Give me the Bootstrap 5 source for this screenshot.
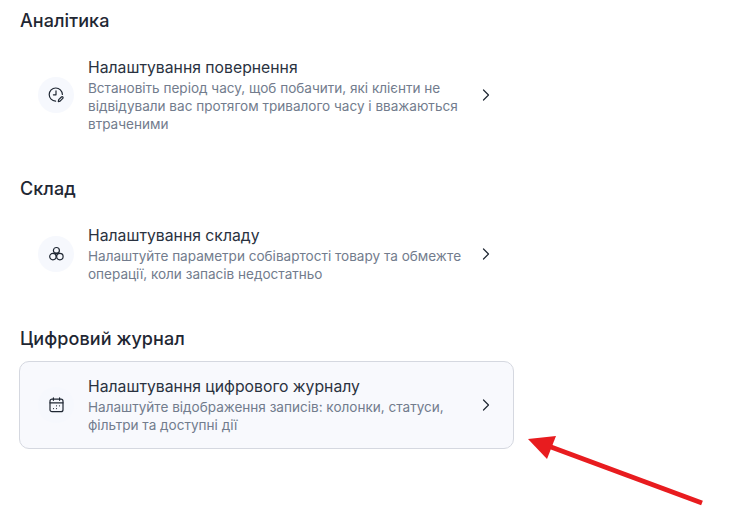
<!doctype html>
<html lang="uk"><head><meta charset="utf-8">
<link href="https://cdn.jsdelivr.net/npm/bootstrap@5.3.0/dist/css/bootstrap.min.css" rel="stylesheet">
<style>
body{font-family:Inter,"Liberation Sans",sans-serif;background:#fff;color:#1f2733;width:747px;height:521px;overflow:hidden;position:relative}
.pagewrap{padding:9px 0 0 19px;width:514px}
.sect{margin-bottom:29px}
.sect-title{font-size:18px;letter-spacing:.07px;line-height:24px;font-weight:500;margin:0 0 10px 1px;color:#1f2733}
.sect-title.lowered{padding-top:1px;margin-bottom:9px}
.setrow{border:1px solid transparent;border-radius:10px;padding:13px 18px;min-height:88px;gap:14px}
.setrow.on{background:#f8f9fd;border-color:#d5d8e0}
.icoz{width:36px;height:36px;flex:none;border-radius:50%;background:#f6f8fd}
.ttl{font-size:15.75px;line-height:22px;color:#2a3240}
.dsc{font-size:13.56px;line-height:18px;color:#727c8d}
.chev{flex:none;margin-right:5px}
.arrowmark{position:absolute;left:0;top:0;pointer-events:none}
</style></head><body>
<div class="pagewrap">
 <section class="sect">
  <h2 class="sect-title">Аналітика</h2>
  <div class="setrow d-flex align-items-center">
   <div class="icoz d-flex align-items-center justify-content-center">
    <svg width="18" height="18" viewBox="0 0 18 18" fill="none" stroke="#1f2733" stroke-width="1.2" stroke-linecap="round" stroke-linejoin="round"><path d="M15.400 8.400A6.600 6.600 0 1 0 8.600 15.200"/><path d="M9 4.800V8.800H6.400"/><path d="M11.300 15.600l.4-1.900 2.700-2.700a.9.9 0 0 1 1.400 1.400l-2.700 2.700z"/></svg>
   </div>
   <div class="flex-grow-1">
    <div class="ttl">Налаштування повернення</div>
    <div class="dsc">Встановіть період часу, щоб побачити, які клієнти не відвідували вас протягом тривалого часу і вважаються втраченими</div>
   </div>
   <svg class="chev" width="8" height="12" viewBox="0 0 8 12" fill="none" stroke="#1f2733" stroke-width="1.2" stroke-linecap="round" stroke-linejoin="round"><path d="M1.500 1l5 5-5 5"/></svg>
  </div>
 </section>
 <section class="sect">
  <h2 class="sect-title lowered">Склад</h2>
  <div class="setrow d-flex align-items-center">
   <div class="icoz d-flex align-items-center justify-content-center">
    <svg width="18" height="18" viewBox="0 0 18 18" fill="none" stroke="#1f2733" stroke-width="1.2"><circle cx="9.400" cy="5.500" r="3"/><circle cx="5.900" cy="11.600" r="3.200"/><circle cx="12.900" cy="11.600" r="3.200"/><path d="M7.500 8.200h3.800M9.400 9.600v2"/></svg>
   </div>
   <div class="flex-grow-1">
    <div class="ttl">Налаштування складу</div>
    <div class="dsc">Налаштуйте параметри собівартості товару та обмежте операції, коли запасів недостатньо</div>
   </div>
   <svg class="chev" width="8" height="12" viewBox="0 0 8 12" fill="none" stroke="#1f2733" stroke-width="1.2" stroke-linecap="round" stroke-linejoin="round"><path d="M1.500 1l5 5-5 5"/></svg>
  </div>
 </section>
 <section class="sect">
  <h2 class="sect-title">Цифровий журнал</h2>
  <div class="setrow on d-flex align-items-center">
   <div class="icoz d-flex align-items-center justify-content-center">
    <svg width="18" height="18" viewBox="0 0 18 18" fill="none" stroke="#1f2733" stroke-width="1.2" stroke-linecap="round" stroke-linejoin="round"><rect x="3" y="3.200" width="13" height="12.500" rx="2"/><path d="M3 6.800h13M6.400 1.900v2.400M12.600 1.900v2.400"/><path d="M9.500 9.800h.01M12.500 9.800h.01M6.500 12.600h.01M9.500 12.600h.01"/></svg>
   </div>
   <div class="flex-grow-1">
    <div class="ttl">Налаштування цифрового журналу</div>
    <div class="dsc">Налаштуйте відображення записів: колонки, статуси, фільтри та доступні дії</div>
   </div>
   <svg class="chev" width="8" height="12" viewBox="0 0 8 12" fill="none" stroke="#1f2733" stroke-width="1.2" stroke-linecap="round" stroke-linejoin="round"><path d="M1.500 1l5 5-5 5"/></svg>
  </div>
 </section>
</div>
<svg class="arrowmark" width="747" height="521" viewBox="0 0 747 521"><path d="M551 447L702 503" stroke="#e81c1f" stroke-width="5" fill="none"/><path d="M528 439L556 436L547 459Z" fill="#e81c1f"/></svg>
</body></html>
